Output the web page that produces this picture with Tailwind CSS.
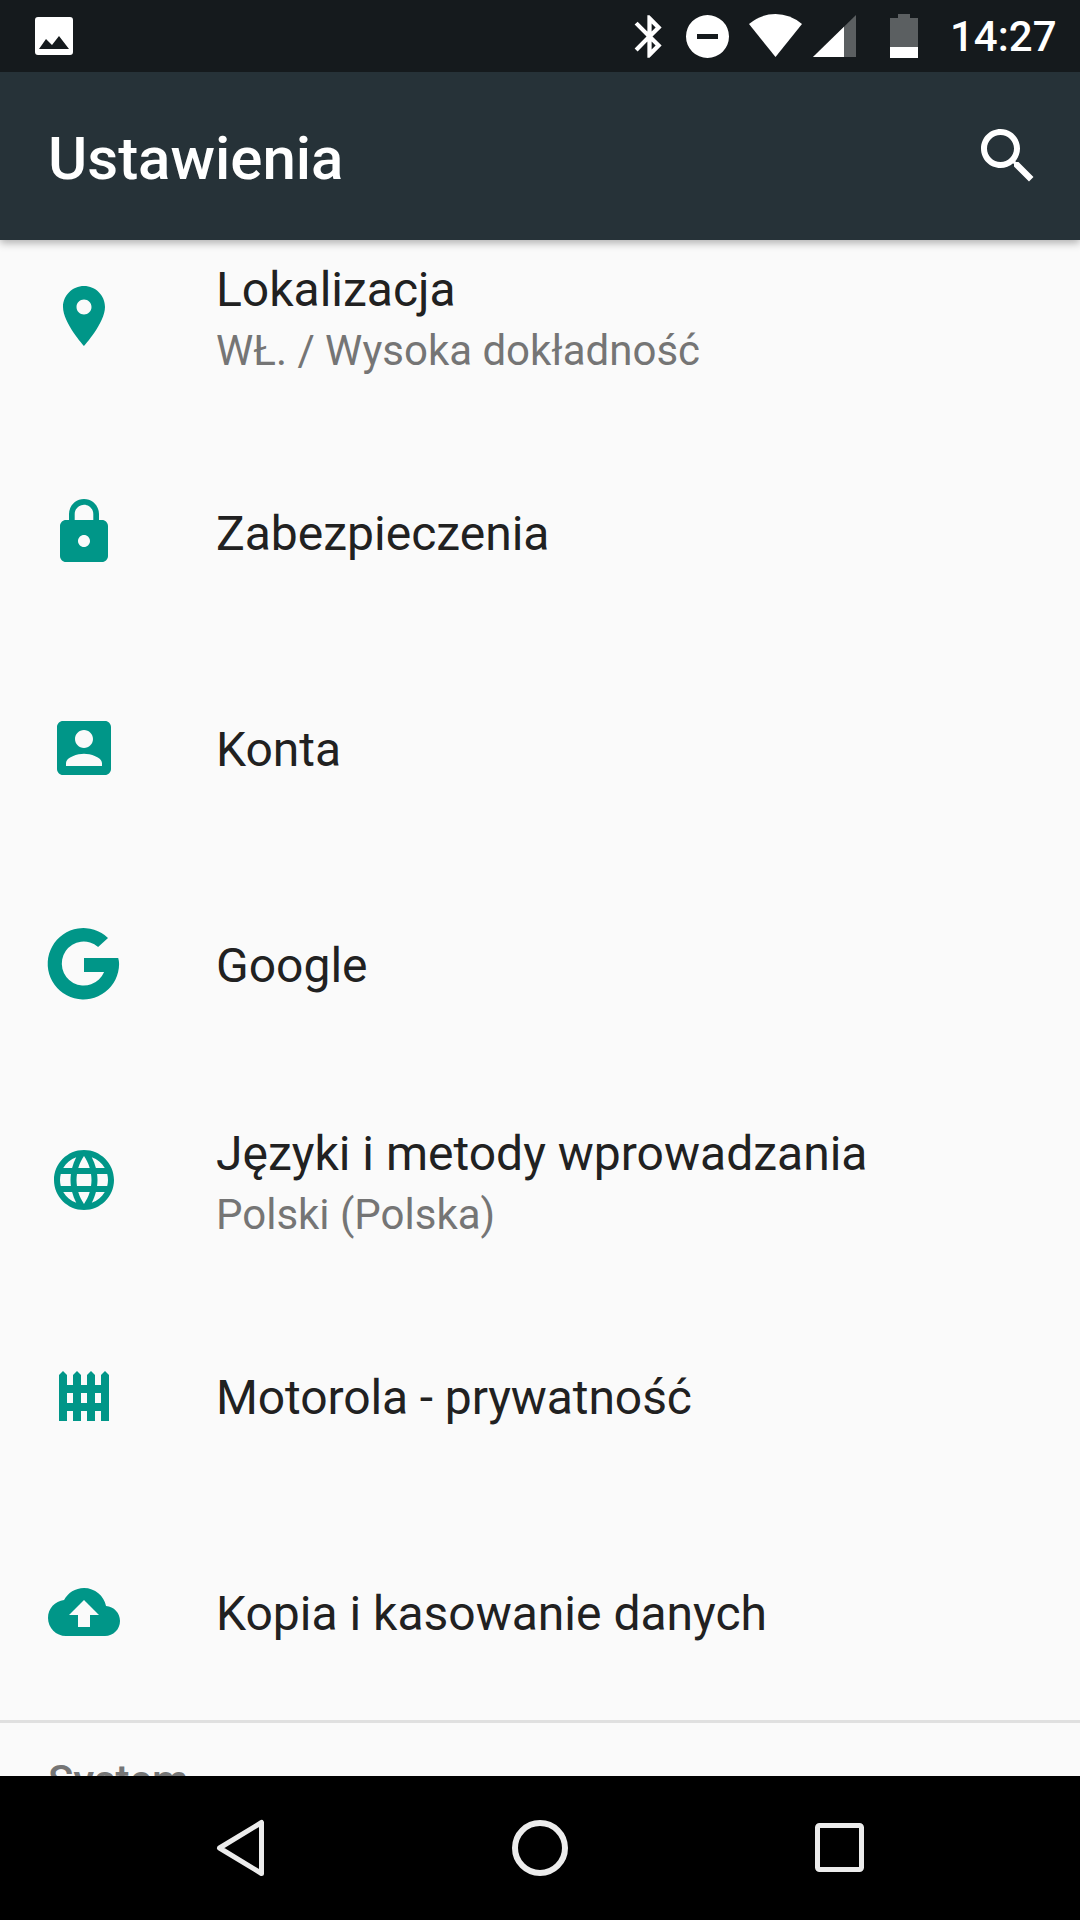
<!doctype html>
<html>
<head>
<meta charset="utf-8">
<title>Ustawienia</title>
<script src="https://cdn.jsdelivr.net/npm/@tailwindcss/browser@4"></script>
</head>
<body class="m-0">
<div class="w-[1080px] h-[1920px] flex flex-col overflow-hidden bg-[#fafafa] font-['Roboto',sans-serif]">

  <!-- status bar -->
  <div class="h-[72px] shrink-0 bg-[#151a1d] flex items-center relative z-20">
    <svg class="ml-[35px] w-[38px] h-[38px]" viewBox="0 0 38 38">
      <path fill="#fff" fill-rule="evenodd" d="M3 0h32a3 3 0 0 1 3 3v32a3 3 0 0 1-3 3H3a3 3 0 0 1-3-3V3a3 3 0 0 1 3-3zM4 32h30L24 19l-7 9-6-6z"/>
    </svg>
    <svg class="absolute left-[624px] top-[11px] w-[51px] h-[51px]" viewBox="0 0 24 24"><path fill="#fff" d="M17.71 7.71L12 2h-1v7.59L6.41 5 5 6.41 10.59 12 5 17.59 6.41 19 11 14.41V22h1l5.71-5.71-4.3-4.29 4.3-4.29zM13 5.83l1.88 1.88L13 9.59V5.83zm1.88 10.46L13 18.17v-3.76l1.88 1.88z"/></svg>
    <svg class="absolute left-[686px] top-[15px] w-[43px] h-[43px]" viewBox="0 0 43 43"><path fill="#fff" fill-rule="evenodd" d="M21.5 0a21.5 21.5 0 1 1 0 43a21.5 21.5 0 1 1 0-43zM11 19v5h21v-5z"/></svg>
    <svg class="absolute left-[749px] top-[14px] w-[53px] h-[43px]" viewBox="0 0 53 43"><path fill="#fff" d="M26.5 43L0 10Q12 0 26.5 0T53 10z"/></svg>
    <svg class="absolute left-[813px] top-[15px] w-[43px] h-[42px]" viewBox="0 0 43 42"><path fill="#fff" fill-opacity="0.3" d="M0 42L43 0v42z"/><path fill="#fff" d="M0 42L31 11.7V42z"/></svg>
    <svg class="absolute left-[890px] top-[14px] w-[28px] h-[44px]" viewBox="0 0 28 44"><path fill="#fff" fill-opacity="0.3" d="M8 0h12v4h8v29H0V4h8z"/><path fill="#fff" d="M0 33h28v11H0z"/></svg>
    <span class="absolute left-[950px] top-[12px] text-[42px] leading-[49px] font-medium text-white">14:27</span>
  </div>

  <!-- app bar -->
  <div class="h-[168px] shrink-0 bg-[#263238] flex items-center justify-between pl-[48px] pr-[36px] relative z-10 shadow-[0_3px_8px_rgba(0,0,0,0.3)]">
    <span class="pt-[5px] text-[60px] leading-[70px] font-medium text-white">Ustawienia</span>
    <svg class="w-[72px] h-[72px]" viewBox="0 0 24 24"><path fill="#fff" d="M15.5 14h-.79l-.28-.27C15.41 12.59 16 11.11 16 9.5 16 5.91 13.09 3 9.5 3S3 5.91 3 9.5 5.91 16 9.5 16c1.61 0 3.09-.59 4.23-1.57l.27.28v.79l5 4.99L20.49 19l-4.99-5zm-6 0C7.01 14 5 11.99 5 9.5S7.01 5 9.5 5 14 7.01 14 9.5 11.99 14 9.5 14z"/></svg>
  </div>

  <!-- settings list, scrolled by 32px -->
  <div class="flex-1 overflow-hidden">
    <div class="-mt-[32px]">
      <div class="h-[216px] flex items-center">
        <svg class="ml-[48px] w-[72px] h-[72px] shrink-0" viewBox="0 0 24 24"><path fill="#009688" d="M12 2C8.13 2 5 5.13 5 9c0 5.25 7 13 7 13s7-7.75 7-13c0-3.87-3.13-7-7-7zm0 9.5c-1.38 0-2.5-1.12-2.5-2.5s1.12-2.5 2.5-2.5 2.5 1.12 2.5 2.5-1.12 2.5-2.5 2.5z"/></svg>
        <div class="ml-[96px] pt-[8px]">
          <div class="text-[48px] leading-[62px] text-[#212121]">Lokalizacja</div>
          <div class="text-[42px] leading-[60px] text-[#757575]">WŁ. / Wysoka dokładność</div>
        </div>
      </div>
      <div class="h-[216px] flex items-center">
        <svg class="ml-[48px] w-[72px] h-[72px] shrink-0" viewBox="0 0 24 24"><path fill="#009688" d="M18 8h-1V6c0-2.76-2.24-5-5-5S7 3.24 7 6v2H6c-1.1 0-2 .9-2 2v10c0 1.1.9 2 2 2h12c1.1 0 2-.9 2-2V10c0-1.1-.9-2-2-2zm-6 9c-1.1 0-2-.9-2-2s.9-2 2-2 2 .9 2 2-.9 2-2 2zm3.1-9H8.9V6c0-1.71 1.39-3.1 3.1-3.1 1.71 0 3.1 1.39 3.1 3.1v2z"/></svg>
        <div class="ml-[96px] pt-[4px] text-[48px] leading-[62px] text-[#212121]">Zabezpieczenia</div>
      </div>
      <div class="h-[216px] flex items-center">
        <svg class="ml-[48px] w-[72px] h-[72px] shrink-0" viewBox="0 0 24 24"><path fill="#009688" d="M3 5v14c0 1.1.89 2 2 2h14c1.1 0 2-.9 2-2V5c0-1.1-.9-2-2-2H5c-1.11 0-2 .9-2 2zm12 4c0 1.66-1.34 3-3 3s-3-1.34-3-3 1.34-3 3-3 3 1.34 3 3zm-9 8c0-2 4-3.1 6-3.1s6 1.1 6 3.1v1H6v-1z"/></svg>
        <div class="ml-[96px] pt-[4px] text-[48px] leading-[62px] text-[#212121]">Konta</div>
      </div>
      <div class="h-[216px] flex items-center">
        <svg class="ml-[48px] w-[72px] h-[72px] shrink-0 overflow-visible" viewBox="0 0 24 24"><path fill="#009688" d="M12 10H23.4C23.6 10.7 23.7 11.3 23.7 12A11.9 11.9 0 1 1 20 3.3L16.7 6.3A7.33 7.33 0 1 0 18.7 14.67H12z"/></svg>
        <div class="ml-[96px] pt-[4px] text-[48px] leading-[62px] text-[#212121]">Google</div>
      </div>
      <div class="h-[216px] flex items-center">
        <svg class="ml-[48px] w-[72px] h-[72px] shrink-0" viewBox="0 0 24 24"><path fill="#009688" d="M11.99 2C6.47 2 2 6.48 2 12s4.47 10 9.99 10C17.52 22 22 17.52 22 12S17.52 2 11.99 2zm6.93 6h-2.95c-.32-1.25-.78-2.45-1.38-3.56 1.84.63 3.37 1.91 4.33 3.56zM12 4.04c.83 1.2 1.48 2.53 1.91 3.96h-3.82c.43-1.43 1.08-2.76 1.91-3.96zM4.26 14C4.1 13.36 4 12.69 4 12s.1-1.36.26-2h3.38c-.08.66-.14 1.32-.14 2 0 .68.06 1.34.14 2H4.26zm.82 2h2.95c.32 1.25.78 2.45 1.38 3.56-1.84-.63-3.37-1.9-4.33-3.56zm2.95-8H5.08c.96-1.66 2.49-2.93 4.33-3.56C8.81 5.55 8.35 6.75 8.03 8zM12 19.96c-.83-1.2-1.48-2.53-1.91-3.96h3.82c-.43 1.43-1.08 2.76-1.91 3.96zM14.34 14H9.66c-.09-.66-.16-1.32-.16-2 0-.68.07-1.35.16-2h4.68c.09.65.16 1.32.16 2 0 .68-.07 1.34-.16 2zm.25 5.56c.6-1.11 1.06-2.31 1.38-3.56h2.95c-.96 1.65-2.49 2.93-4.33 3.56zM16.36 14c.08-.66.14-1.32.14-2 0-.68-.06-1.34-.14-2h3.38c.16.64.26 1.31.26 2s-.1 1.36-.26 2h-3.38z"/></svg>
        <div class="ml-[96px] pt-[8px]">
          <div class="text-[48px] leading-[62px] text-[#212121]">Języki i metody wprowadzania</div>
          <div class="text-[42px] leading-[60px] text-[#757575]">Polski (Polska)</div>
        </div>
      </div>
      <div class="h-[216px] flex items-center">
        <svg class="ml-[48px] w-[72px] h-[72px] shrink-0" viewBox="0 0 72 72"><path fill="#009688" d="M11 15l4-4 4 4v10h6V15l4-4 4 4v10h6V15l4-4 4 4v10h6V15l4-4 4 4v46h-8V51h-6v10h-8V51h-6v10h-8V51h-6v10h-8zM19 33v10h6V33zM33 33v10h6V33zM47 33v10h6V33z" fill-rule="evenodd"/></svg>
        <div class="ml-[96px] pt-[4px] text-[48px] leading-[62px] tracking-[-0.1px] text-[#212121]">Motorola - prywatność</div>
      </div>
      <div class="h-[216px] flex items-center">
        <svg class="ml-[48px] w-[72px] h-[72px] shrink-0" viewBox="0 0 24 24"><path fill="#009688" d="M19.35 10.04C18.67 6.59 15.64 4 12 4 9.11 4 6.6 5.64 5.35 8.04 2.34 8.36 0 10.91 0 14c0 3.31 2.69 6 6 6h13c2.76 0 5-2.24 5-5 0-2.64-2.05-4.78-4.65-4.96zM14 13v4h-4v-4H7l5-5 5 5h-3z"/></svg>
        <div class="ml-[96px] pt-[4px] text-[48px] leading-[62px] text-[#212121]">Kopia i kasowanie danych</div>
      </div>
      <div class="h-[3px] bg-[#e0e0e0]"></div>
      <div class="pl-[48px] pt-[33px] text-[42px] leading-[50px] font-medium text-[#757575]">System</div>
    </div>
  </div>

  <!-- nav bar -->
  <div class="h-[144px] shrink-0 bg-black flex items-center relative z-10">
    <svg class="absolute left-[214px] top-[42px] w-[52px] h-[60px]" viewBox="0 0 52 60"><path fill="none" stroke="#ececec" stroke-width="5" stroke-linejoin="round" d="M47.5 4.5V55.5L5.5 30z"/></svg>
    <svg class="absolute left-[510px] top-[42px] w-[60px] h-[60px]" viewBox="0 0 60 60"><circle cx="30" cy="30" r="25" fill="none" stroke="#ececec" stroke-width="6"/></svg>
    <svg class="absolute left-[813px] top-[45px] w-[54px] h-[54px]" viewBox="0 0 54 54"><rect x="4.5" y="4.5" width="44" height="44" rx="2" fill="none" stroke="#ececec" stroke-width="5"/></svg>
  </div>
</div>
</body>
</html>
